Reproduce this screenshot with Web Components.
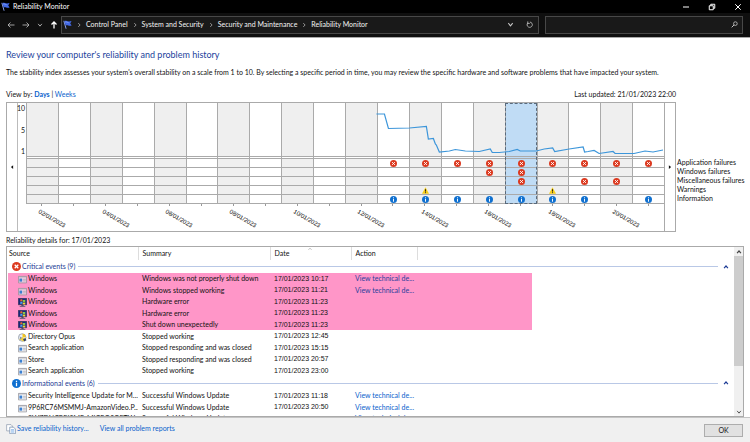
<!DOCTYPE html>
<html lang="en">
<head>
<meta charset="utf-8">
<title>Reliability Monitor</title>
<style>
body { margin: 0; font: 7px/11px Lato, "Open Sans", sans-serif; color: #111; background: #fff; }
</style>
</head>
<body>
<rm-app></rm-app>
<script>
const BASE = `<style>
*, *::before, *::after { box-sizing: border-box; }
button, input { font: inherit; color: inherit; margin: 0; padding: 0; border: 0; background: none; }
a { color: #0a62cc; text-decoration: none; }
</style>`;
function define(name, html) {
  const t = document.createElement('template');
  customElements.define(name, class extends HTMLElement {
    connectedCallback() {
      if (this.shadowRoot) return;
      t.innerHTML = BASE + (typeof html === 'function' ? html(this) : html);
      this.attachShadow({ mode: 'open' }).append(t.content.cloneNode(true));
    }
  });
}

const ICONS = {
  flag: '<path d="M1.500 1.500 5.500 15.500" stroke="#8ea6f4" stroke-width="1.700"/><path d="M2.500 1.800C5.500 0 7.500 4 15.200 1.800L12.800 6l2.600 3.600C10 12 8.400 7.600 4.800 9.800z" fill="#4269e6"/><path d="M4 3.600c2-1 4 1.600 6 1" stroke="#9ab3ff" fill="none"/>',
  back: '<path d="M15 8H2M7 3 2 8l5 5" stroke="currentColor" stroke-width="1.7" fill="none"/>',
  forward: '<path d="M1 8h13M9 3l5 5-5 5" stroke="currentColor" stroke-width="1.7" fill="none"/>',
  up: '<path d="M8 15V2M3 7l5-5 5 5" stroke="currentColor" stroke-width="2.6" fill="none"/>',
  down: '<path d="m3 5 5 6 5-6" stroke="currentColor" stroke-width="2.4" fill="none"/>',
  chevup: '<path d="m3 11 5-6 5 6" stroke="currentColor" stroke-width="3.4" fill="none"/>',
  thinup: '<path d="m2 11 6-6 6 6" stroke="currentColor" stroke-width="2" fill="none"/>',
  right: '<path d="m6 3 5 5-5 5" stroke="currentColor" stroke-width="2" fill="none"/>',
  refresh: '<path d="M4 4.5A6 6 0 1 0 9 2.5M4 1v4.5h4.5" stroke="currentColor" stroke-width="1.9" fill="none"/>',
  search: '<circle cx="10" cy="6" r="4.2" stroke="currentColor" stroke-width="1.8" fill="none"/><path d="M7 9 1.500 14.500" stroke="currentColor" stroke-width="2.200"/>',
  min: '<path d="M2 8h12" stroke="currentColor" stroke-width="2"/>',
  restore: '<path d="M2.500 5.500h8v8h-8zM5.500 5V2.500h8v8H11" stroke="currentColor" stroke-width="2" fill="none"/>',
  close: '<path d="m2.500 2.500 11 11m0-11-11 11" stroke="currentColor" stroke-width="2" fill="none"/>',
  triLeft: '<path d="M11 3v10L5 8z" fill="#111"/>',
  triRight: '<path d="M5 3v10l6-5z" fill="#111"/>',
  error: '<circle cx="8" cy="8" r="8" fill="#dc3a20"/><path d="m4.800 4.800 6.400 6.400m0-6.400-6.400 6.400" stroke="#fff" stroke-width="2.200"/>',
  info: '<circle cx="8" cy="8" r="8" fill="#0f70d0"/><path d="M8 6.800V13M8 3v2.300" stroke="#fff" stroke-width="2.200"/>',
  warn: '<path d="M8 .5 16 15.500H0z" fill="#f7cd16"/><path d="M8 5v5.500M8 12v2" stroke="#222" stroke-width="2.200"/>',
  app: '<path d="M.8 2.500h14.400v11.500H.8z" fill="#fafafa" fill-opacity=".6" stroke="#8b8b93" stroke-width="1.300"/><path d="M1 3.500h14" stroke="#a5a5ad" stroke-width="1.500"/><path d="M2.500 6.300h5v5.500h-5z" fill="#3b7fd0"/><path d="M9 7.500h5M9 10.500h5" stroke="#a0a0aa" stroke-width="1.400"/>',
  monitor: '<path d="M.5 .5h15v11.500H.5z" fill="#17257c" stroke="#343446"/><path d="M4 3c1.500-1 2.500-1 3.800 0v3.500C6.500 5.500 5.500 5.500 4 6.500z" fill="#f0692c"/><path d="M8.500 3c1.500 1 2.500 1 4.500 0v3.500c-2 1-3 1-4.500 0z" fill="#86cc48"/><path d="M4 7.500c1.500-1 2.500-1 3.800 0v3.500c-1.300-1-2.300-1-3.800 0z" fill="#4a9cf4"/><path d="M8.500 7.500c1.500 1 2.500 1 4.500 0V11c-2 1-3 1-4.500 0z" fill="#f9d030"/><path d="M6 12h4v2h3v1.500H3V14h3z" fill="#4e5368"/>',
  opus: '<circle cx="7.500" cy="8" r="6.700" fill="#eef1f6" stroke="#7b8494" stroke-width="1.200"/><path d="M8 1.500a6.500 6.500 0 0 1 6 6L8 8z" fill="#f3c51d"/><path d="M2 11l6-4 5 5-3 3z" fill="#f0cf3c"/><path d="m3 6 4 2-3 4z" fill="#8292b0"/><path d="m9 11 4-2 2 4-4 2z" fill="#35425e"/>',
  copy: '<path d="M1 1h7l2 2v8H1z" fill="#fff" stroke="#7f8da3"/><path d="M6 5h6l3 3v7.500H6z" fill="#fff" stroke="#5c789f"/><path d="M8 9h5M8 11h5M8 13h5" stroke="#5d9be0"/>'
};
define('rm-icon', el => `<style>
:host { display: inline-block; flex: none; width: 8px; height: 8px; }
svg { display: block; width: 100%; height: 100%; }
</style><svg viewBox="0 0 16 16" aria-hidden="true">${ICONS[el.getAttribute('name')]}</svg>`);

define('rm-titlebar', `<style>
:host { display: flex; align-items: center; height: 13px; padding: 0 8px 0 1px; gap: 3px; background: #000; color: #fff; }
.buttons { margin-left: auto; display: flex; gap: 18px; }
button { display: block; }
rm-icon { display: block; }
.flag { width: 9px; height: 9px; }
</style>
<rm-icon class="flag" name="flag"></rm-icon><span><slot></slot></span>
<span class="buttons">
<button aria-label="Minimize"><rm-icon name="min"></rm-icon></button>
<button aria-label="Restore"><rm-icon name="restore"></rm-icon></button>
<button aria-label="Close"><rm-icon name="close"></rm-icon></button></span>`);

define('rm-navbar', `<style>
:host { display: flex; align-items: center; height: 25px; padding: 0 7px 1px; gap: 6px; background: #0f0f0f; color: #f4f4f4; border-bottom: 1px solid #a8a8a8; }
rm-icon { display: block; }
.arrows { display: flex; align-items: center; gap: 7px; width: 48px; color: #b8b8b8; }
.small { width: 6px; height: 6px; }
.now { color: #fff; }
.box { display: flex; align-items: center; height: 18px; border: 1px solid #484848; background: #191919; }
.path { flex: 1; padding: 0 5px 0 1px; gap: 4px; }
.flag { width: 9px; height: 9px; }
.path a { color: inherit; }
.sep { color: #bdbdbd; width: 6px; height: 6px; }
.tools { margin-left: auto; display: flex; align-items: center; gap: 12px; color: #c8c8c8; }
.find { width: 198px; padding-right: 4px; color: #c8c8c8; }
input { flex: 1; min-width: 0; outline: 0; }
.tools rm-icon, .find rm-icon { width: 7px; height: 7px; }
nav { display: flex; align-items: center; gap: 4px; }
</style>
<span class="arrows">
<button aria-label="Back"><rm-icon name="back"></rm-icon></button>
<button aria-label="Forward"><rm-icon name="forward"></rm-icon></button>
<button aria-label="Recent"><rm-icon class="small" name="down"></rm-icon></button>
<button aria-label="Up" class="now"><rm-icon name="up"></rm-icon></button></span>
<div class="box path"><rm-icon class="flag" name="flag"></rm-icon><nav>
<rm-icon class="sep" name="right"></rm-icon><a href="#">Control Panel</a>
<rm-icon class="sep" name="right"></rm-icon><a href="#">System and Security</a>
<rm-icon class="sep" name="right"></rm-icon><a href="#">Security and Maintenance</a>
<rm-icon class="sep" name="right"></rm-icon><a href="#">Reliability Monitor</a></nav>
<span class="tools"><button aria-label="Previous locations"><rm-icon name="down"></rm-icon></button>
<button aria-label="Refresh"><rm-icon name="refresh"></rm-icon></button></span></div>
<label class="box find"><input type="text" aria-label="Search"><rm-icon name="search"></rm-icon></label>`);

define('rm-day', el => {
  const marks = (el.getAttribute('marks') || '').split('');
  const names = ['error', 'error', 'error', 'warn', 'info'];
  return `<style>
:host { display: block; flex: 1 1 0; min-width: 0; position: relative; }
.graph { height: 54px; border-bottom: 1px solid #aaa; }
.gap { height: 1px; }
.graph, .gap, .mark { border-left: 1px solid #aaa; }
.mark { display: flex; justify-content: center; align-items: center; height: 9px; border-top: 1px solid #aaa; }
.mark rm-icon { width: 7px; height: 7px; }
.foot { position: relative; height: 28px; border-top: 1px solid #aaa; }
.foot::before { content: ""; display: block; width: 1px; height: 2px; margin: 0 auto; background: #999; }
:host([shade]) .graph, :host([shade]) .mark { background: #efefef; }
:host([selected]) .graph, :host([selected]) .mark, :host([selected]) .gap { background: #c0dcf5; }
:host([selected])::after { content: ""; position: absolute; inset: 0 0 27px; border: 1px dashed #596a7c; }
time { position: absolute; left: 40%; top: 3px; font: 6px/8px "Liberation Sans", sans-serif; white-space: nowrap; transform: rotate(30deg); transform-origin: 0 50%; }
</style><div class="graph"></div><div class="gap"></div>
${names.map((n, i) => `<div class="mark">${marks[i] === '1' ? `<rm-icon name="${n}"></rm-icon>` : ''}</div>`).join('')}
<div class="foot">${el.hasAttribute('date') ? `<time>${el.getAttribute('date')}</time>` : ''}</div>`;
});

const MARKS = { 13: '10001', 14: '10011', 15: '10001', 16: '11001', 17: '11101', 18: '10011', 19: '10101', 20: '10100', 21: '10001' };
const days = Array.from({ length: 20 }, (_, i) => i + 2).map(d =>
  `<rm-day marks="${MARKS[d] || ''}" ${d % 2 ? '' : `shade date="${String(d).padStart(2, '0')}/01/2023"`} ${d === 17 ? 'selected' : ''}></rm-day>`).join('');

define('rm-chart', `<style>
:host { display: flex; }
.frame { flex: 1; display: flex; border: 1px solid #aaa; height: 130px; }
.step { width: 11px; display: grid; place-items: center; }
.step rm-icon { width: 6px; height: 6px; }
.prev { border-right: 1px solid #bbb; }
.next { border-left: 1px solid #aaa; }
.scale { width: 8px; height: 54px; display: flex; flex-direction: column; justify-content: space-between; align-items: flex-end; padding: 0 1px 0 0; }
.plot { flex: 1; display: flex; position: relative; }
svg { position: absolute; left: 0; top: 0; width: 100%; height: 54px; pointer-events: none; }
.legend { width: 68px; padding: 56px 0 0 1px; line-height: 9px; white-space: nowrap; }
</style>
<div class="frame">
<button class="step prev" aria-label="Earlier"><rm-icon name="triLeft"></rm-icon></button>
<div class="scale"><span>10</span><span>5</span><span>1</span></div>
<div class="plot">${days}
<svg viewBox="0 0 639 54" preserveAspectRatio="none"><polyline fill="none" stroke="#3d96da" stroke-width="1.200" vector-effect="non-scaling-stroke" points="351,11 359,11 363,25.500 384,25 401,23.500 403,36 408,35.500 410,41 411,42 414,49 424,48 430,46.500 440,48 454,48.500 465,46 467,49.500 474,49.500 484,48.500 492,46.500 495,48 511,48 519,46 527.500,45 529.500,48.500 544,46 558,44 559.500,49 563,48.500 569,47.500 574,50.500 588,48.500 590,50.500 609,50.500 620,48 628,49 638,47"/></svg></div>
<button class="step next" aria-label="Later"><rm-icon name="triRight"></rm-icon></button></div>
<div class="legend"><div>Application failures</div><div>Windows failures</div><div>Miscellaneous failures</div><div>Warnings</div><div>Information</div></div>`);

const row = (icon, src, sum, date, link, hot) => `<tr${hot ? ' class="hot"' : ''}><td class="src"><rm-icon name="${icon}"></rm-icon>${src}</td><td>${sum}</td><td class="date">17/01/2023 ${date}</td><td>${link ? '<a href="#">View technical de...</a>' : ''}</td><td></td><td></td></tr>`;
const group = (icon, text) => `<tr class="group"><th colspan="6" scope="rowgroup"><div><rm-icon name="${icon}"></rm-icon><span>${text}</span><i></i><button aria-label="Collapse"><rm-icon class="fold" name="chevup"></rm-icon></button></div></th></tr>`;
define('rm-details', `<style>
:host { display: flex; min-height: 0; border: 1px solid #aaa; }
.view { flex: 1; overflow: hidden; padding-left: 1px; }
table { width: 100%; border-collapse: collapse; table-layout: fixed; }
td, th { padding: 0 0 0 4px; font-weight: 400; text-align: left; white-space: nowrap; overflow: hidden; height: 11px; line-height: 11px; }
td:first-child, th:first-child { padding-left: 1px; }
thead th { height: 13px; border-right: 1px solid #ddd; }
thead th.plain { border: 0; }
thead th.sorted { position: relative; }
.sorted rm-icon { position: absolute; left: 50%; top: 0; width: 6px; height: 4px; color: #777; margin-left: -4px; }
tbody tr:nth-child(odd) td { height: 12px; line-height: 12px; }
td.src { padding-left: 10px; }
td.src rm-icon { width: 9px; height: 9px; margin-right: 1px; vertical-align: middle; }
.hot td:not(:last-child) { background: #ff96c8; }
.hot a { color: #2a3e9c; }
.date { font-family: "Liberation Sans", sans-serif; }
.group th { height: 13px; padding-left: 4px; }
.late .group th { height: 14px; }
.group div { display: flex; align-items: center; gap: 1px; color: #1b3a94; }
.group div > rm-icon { width: 9px; height: 9px; }
.group i { flex: 1; height: 1px; background: #b9c8e6; margin: 0 4px 0 2px; }
.group button { margin-right: 5px; }
.fold { display: block; width: 6px; height: 6px; }
.bar { width: 9px; display: flex; flex-direction: column; background: #f0f0f0; }
.bar button { height: 9px; display: grid; place-items: center; color: #444; }
.bar rm-icon { width: 6px; height: 6px; }
.track { flex: 1; }
.thumb { height: 73%; background: #cdcdcd; }
</style>
<div class="view"><table>
<colgroup><col style="width:130px"><col style="width:132px"><col style="width:81px"><col style="width:66px"><col style="width:115px"><col></colgroup>
<thead><tr><th>Source</th><th>Summary</th><th class="sorted">Date<rm-icon name="thinup"></rm-icon></th><th>Action</th><th class="plain"></th><th class="plain"></th></tr></thead>
<tbody>${group('error', 'Critical events (9)')}
${row('app', 'Windows', 'Windows was not properly shut down', '10:17', 1, 1)}
${row('app', 'Windows', 'Windows stopped working', '11:21', 1, 1)}
${row('monitor', 'Windows', 'Hardware error', '11:23', 0, 1)}
${row('monitor', 'Windows', 'Hardware error', '11:23', 0, 1)}
${row('monitor', 'Windows', 'Shut down unexpectedly', '11:23', 0, 1)}
${row('opus', 'Directory Opus', 'Stopped working', '12:45')}
${row('app', 'Search application', 'Stopped responding and was closed', '15:15')}
${row('app', 'Store', 'Stopped responding and was closed', '20:57')}
${row('app', 'Search application', 'Stopped working', '23:00')}</tbody>
<tbody class="late">${group('info', 'Informational events (6)')}
${row('app', 'Security Intelligence Update for M...', 'Successful Windows Update', '11:18', 1)}
${row('app', '9P6RC76MSMMJ-AmazonVideo.P...', 'Successful Windows Update', '20:50', 1)}
${row('app', '9WZDNCRFJ3MR-MICROSOFTW...', 'Successful Windows Update', '20:51', 1)}</tbody>
</table></div>
<div class="bar"><button aria-label="Scroll up"><rm-icon name="chevup"></rm-icon></button><div class="track"><div class="thumb"></div></div><button aria-label="Scroll down"><rm-icon name="down"></rm-icon></button></div>`);

define('rm-footer', `<style>
:host { display: flex; align-items: center; height: 25px; padding: 0 7px 0 6px; background: #f0f0f0; border-top: 1px solid #c4c4c4; }
rm-icon { width: 10px; height: 10px; margin-right: 1px; }
a { margin-bottom: 4px; }
rm-icon { margin-bottom: 3px; }
a + a { margin-left: 11px; }
.ok { margin-left: auto; width: 39px; height: 13px; border: 1px solid #adadad; background: #e1e1e1; }
</style><rm-icon name="copy"></rm-icon><a href="#">Save reliability history...</a><a href="#">View all problem reports</a><button class="ok">OK</button>`);

define('rm-app', `<style>
:host { display: flex; flex-direction: column; height: 100vh; }
main { flex: 1; min-height: 0; display: flex; flex-direction: column; padding: 0 6px; }
h1 { margin: 10px 0 0; font-size: 9px; line-height: 14px; font-weight: 400; color: #1c3f9c; }
p { margin: 5px 0 0; white-space: nowrap; }
.bar { display: flex; margin: 11px 0 2px; padding-right: 68px; }
.bar > :last-child { margin-left: auto; }
rm-details { flex: 1; }
.caption { margin: 3px 0 0; }
</style>
<rm-titlebar>Reliability Monitor</rm-titlebar>
<rm-navbar></rm-navbar>
<main>
<h1>Review your computer's reliability and problem history</h1>
<p>The stability index assesses your system's overall stability on a scale from 1 to 10. By selecting a specific period in time, you may review the specific hardware and software problems that have impacted your system.</p>
<div class="bar"><span>View by: <a href="#"><b>Days</b></a> | <a href="#">Weeks</a></span><span>Last updated: 21/01/2023 22:00</span></div>
<rm-chart></rm-chart>
<div class="caption">Reliability details for: 17/01/2023</div>
<rm-details></rm-details>
</main>
<rm-footer></rm-footer>`);
</script>
</body>
</html>
